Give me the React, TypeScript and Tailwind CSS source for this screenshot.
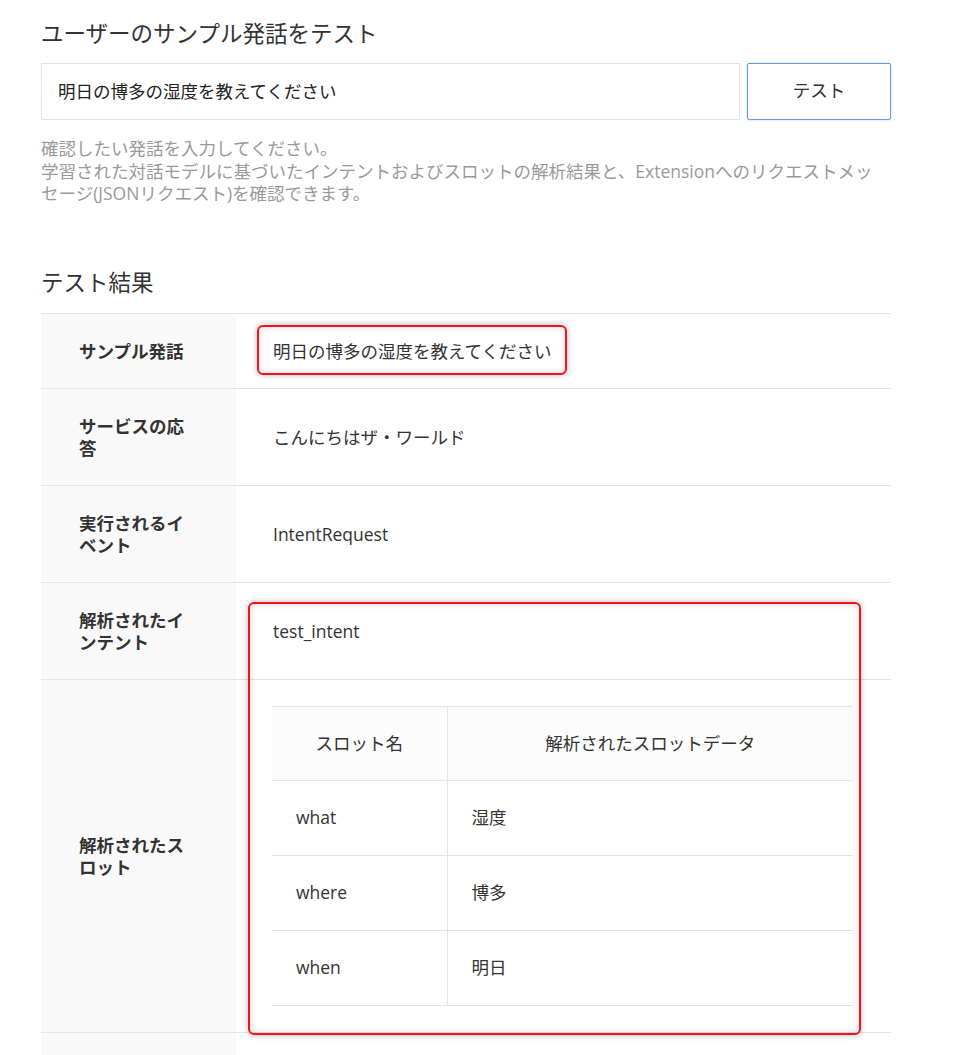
import React from "react"

const rows = [
  { label: "サービスの応答", value: "こんにちはザ・ワールド" },
  { label: "実行されるイベント", value: "IntentRequest" },
  { label: "解析されたインテント", value: "test_intent" },
]

const slots = [
  { name: "what", data: "湿度" },
  { name: "where", data: "博多" },
  { name: "when", data: "明日" },
]

const highlight =
  "absolute pointer-events-none rounded-[6px] border-2 border-[#f0141e] shadow-[0_0_6px_rgba(0,0,0,0.28),inset_0_0_6px_rgba(0,0,0,0.18)]"

function Label({ children }: { children?: React.ReactNode }) {
  return (
    <div className="w-[195px] shrink-0 bg-[#f9f9f9] pl-[38px] pr-[46px] py-[26px] font-bold leading-[22px] flex items-center">
      {children}
    </div>
  )
}

export default function App() {
  return (
    <div className="min-h-screen bg-white text-[#333] text-[17.5px] font-['Open_Sans','Noto_Sans_CJK_JP',sans-serif]">
      <div className="w-[850px] ml-[41px] pt-[19px]">
        <h2 className="text-[22.5px] leading-[30px]">ユーザーのサンプル発話をテスト</h2>

        <div className="flex gap-[7px] mt-[14px]">
          <div className="flex-1 h-[57px] border border-[#e3e3e3] pl-[16px] flex items-center text-[#222]">
            明日の博多の湿度を教えてください
          </div>
          <button className="w-[144px] h-[57px] pb-[3px] border border-[#6b9be6] rounded-[2px] shadow-[0_0_2px_rgba(80,140,230,0.5)] text-[#333] text-[17.5px]">
            テスト
          </button>
        </div>

        <p className="mt-[17px] text-[#9a9a9a] leading-[22.5px] pr-[10px]">
          確認したい発話を入力してください。
          <br />
          学習された対話モデルに基づいたインテントおよびスロットの解析結果と、Extensionへのリクエストメッセージ(JSONリクエスト)を確認できます。
        </p>

        <h2 className="text-[22.5px] leading-[30px] mt-[63px]">テスト結果</h2>

        <div className="relative mt-[15px] border-t border-[#e5e5e5]">
          <div className="flex border-b border-[#e5e5e5]">
            <Label>サンプル発話</Label>
            <div className="relative flex-1 pl-[37px] flex items-center leading-[22px]">
              明日の博多の湿度を教えてください
              <div className={`${highlight} left-[21px] top-[11px] w-[310px] h-[50px]`} />
            </div>
          </div>

          {rows.map((r) => (
            <div key={r.label} className="flex border-b border-[#e5e5e5]">
              <Label>{r.label}</Label>
              <div className="flex-1 pl-[37px] flex items-center leading-[22px]">{r.value}</div>
            </div>
          ))}

          <div className="flex border-b border-[#e5e5e5]">
            <Label>解析されたスロット</Label>
            <div className="flex-1 pl-[36px] pr-[38px] py-[26px]">
              <table className="w-full border-collapse">
                <thead>
                  <tr className="bg-[#fcfcfc] border-y border-[#e5e5e5]">
                    <th className="w-[175px] h-[74px] font-normal text-center border-r border-[#e5e5e5]">スロット名</th>
                    <th className="h-[74px] font-normal text-center">解析されたスロットデータ</th>
                  </tr>
                </thead>
                <tbody>
                  {slots.map((s) => (
                    <tr key={s.name} className="border-b border-[#e5e5e5]">
                      <td className="h-[75px] pl-[24px] border-r border-[#e5e5e5]">{s.name}</td>
                      <td className="h-[75px] pl-[24px]">{s.data}</td>
                    </tr>
                  ))}
                </tbody>
              </table>
            </div>
          </div>

          <div className="flex">
            <div className="w-[195px] h-[40px] shrink-0 bg-[#f9f9f9]" />
          </div>

          <div className={`${highlight} left-[207px] top-[288px] w-[613px] h-[433px]`} />
        </div>
      </div>
    </div>
  )
}
